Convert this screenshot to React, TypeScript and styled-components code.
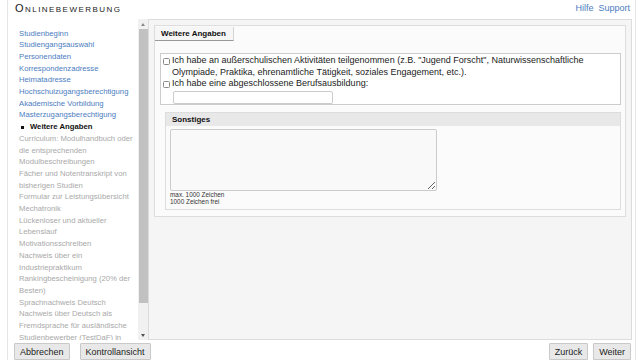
import styled, { createGlobalStyle } from "styled-components"

const GlobalStyle = createGlobalStyle`
  body {
    margin: 0;
    background: #fff;
    font-family: "Liberation Sans", Arial, sans-serif;
  }
`

type NavState = "done" | "active" | "open"

const steps: { label: string; state: NavState }[] = [
  { label: "Studienbeginn", state: "done" },
  { label: "Studiengangsauswahl", state: "done" },
  { label: "Personendaten", state: "done" },
  { label: "Korrespondenzadresse", state: "done" },
  { label: "Heimatadresse", state: "done" },
  { label: "Hochschulzugangsberechtigung", state: "done" },
  { label: "Akademische Vorbildung", state: "done" },
  { label: "Masterzugangsberechtigung", state: "done" },
  { label: "Weitere Angaben", state: "active" },
  { label: "Curriculum: Modulhandbuch oder die entsprechenden Modulbeschreibungen", state: "open" },
  { label: "Fächer und Notentranskript von bisherigen Studien", state: "open" },
  { label: "Formular zur Leistungsübersicht Mechatronik", state: "open" },
  { label: "Lückenloser und aktueller Lebenslauf", state: "open" },
  { label: "Motivationsschreiben", state: "open" },
  { label: "Nachweis über ein Industriepraktikum", state: "open" },
  { label: "Rankingbescheinigung (20% der Besten)", state: "open" },
  { label: "Sprachnachweis Deutsch", state: "open" },
  { label: "Nachweis über Deutsch als Fremdsprache für ausländische Studienbewerber (TestDaF) in", state: "open" },
]

export default function App() {
  return (
    <>
      <GlobalStyle />
      <Page>
        <Header>
          <Title>Onlinebewerbung</Title>
          <TopLinks>
            <TopLink href="#">Hilfe</TopLink>
            <TopLink href="#">Support</TopLink>
          </TopLinks>
        </Header>
        <Body>
          <Sidebar>
            <NavList>
              {steps.map((s) => (
                <NavItem key={s.label} $state={s.state}>
                  {s.state === "active" && <Bullet />}
                  {s.label}
                </NavItem>
              ))}
            </NavList>
            <ScrollTrack>
              <ScrollArrow>
                <ArrowUp />
              </ScrollArrow>
              <ScrollThumb />
              <ScrollArrow style={{ marginTop: "auto" }}>
                <ArrowDown />
              </ScrollArrow>
            </ScrollTrack>
          </Sidebar>
          <Main>
            <Panel>
              <Tab>Weitere Angaben</Tab>
              <CheckBox>
                <CheckRow>
                  <Check type="checkbox" />
                  <CheckLabel>
                    Ich habe an außerschulischen Aktivitäten teilgenommen (z.B. "Jugend Forscht",
                    Naturwissenschaftliche Olympiade, Praktika, ehrenamtliche Tätigkeit, soziales
                    Engagement, etc.).
                  </CheckLabel>
                </CheckRow>
                <CheckRow>
                  <Check type="checkbox" />
                  <CheckLabel>Ich habe eine abgeschlossene Berufsausbildung:</CheckLabel>
                </CheckRow>
                <TextInput type="text" />
              </CheckBox>
              <Fieldset>
                <Legend>Sonstiges</Legend>
                <FieldBody>
                  <TextArea />
                  <Note>max. 1000 Zeichen</Note>
                  <Note>1000 Zeichen frei</Note>
                </FieldBody>
              </Fieldset>
            </Panel>
          </Main>
        </Body>
        <Footer>
          <ButtonGroup $gap={10}>
            <Button>Abbrechen</Button>
            <Button>Kontrollansicht</Button>
          </ButtonGroup>
          <ButtonGroup $gap={5}>
            <Button>Zurück</Button>
            <Button>Weiter</Button>
          </ButtonGroup>
        </Footer>
      </Page>
    </>
  )
}

const Page = styled.div`
  margin-left: 7px;
  width: 629px;
  height: 360px;
  box-sizing: border-box;
  border-left: 1px solid #e6e6e6;
  border-right: 1px solid #e6e6e6;
  padding: 0 3px 0 7px;
  display: flex;
  flex-direction: column;
  overflow: hidden;
`

const Header = styled.div`
  height: 19px;
  flex-shrink: 0;
  box-sizing: border-box;
  padding: 2px 2px 0 0;
  display: flex;
  justify-content: space-between;
  align-items: flex-start;
`

const Title = styled.div`
  font-size: 11px;
  line-height: 12px;
  font-variant: small-caps;
  letter-spacing: 1.45px;
  color: #1a1a1a;
`

const TopLinks = styled.div`
  display: flex;
  gap: 5px;
`

const TopLink = styled.a`
  font-size: 9px;
  line-height: 12px;
  color: #4c7dc0;
  text-decoration: none;
`

const Body = styled.div`
  display: flex;
  height: 321px;
  flex-shrink: 0;
`

const Sidebar = styled.div`
  width: 133px;
  display: flex;
  flex-shrink: 0;
`

const NavList = styled.ul`
  list-style: none;
  margin: 0;
  width: 123px;
  height: 321px;
  box-sizing: border-box;
  padding: 8.5px 0 0 4px;
  overflow: hidden;
`

const NavItem = styled.li<{ $state: NavState }>`
  position: relative;
  font-size: 7.7px;
  line-height: 11.7px;
  color: ${(p) => (p.$state === "done" ? "#4c7dc0" : p.$state === "active" ? "#111" : "#a9a9a9")};
  font-weight: ${(p) => (p.$state === "active" ? "bold" : "normal")};
  padding-left: ${(p) => (p.$state === "active" ? "11px" : "0")};
`

const Bullet = styled.span`
  position: absolute;
  left: 2px;
  top: 5px;
  width: 2.5px;
  height: 2.5px;
  background: #111;
`

const ScrollTrack = styled.div`
  width: 10px;
  background: #f1f1f1;
  display: flex;
  flex-direction: column;
  align-items: center;
`

const ScrollArrow = styled.div`
  height: 10px;
  width: 10px;
  display: flex;
  align-items: center;
  justify-content: center;
`

const ArrowUp = styled.span`
  width: 0;
  height: 0;
  border-left: 2.5px solid transparent;
  border-right: 2.5px solid transparent;
  border-bottom: 3px solid #8a8a8a;
`

const ArrowDown = styled.span`
  width: 0;
  height: 0;
  border-left: 2.5px solid transparent;
  border-right: 2.5px solid transparent;
  border-top: 3px solid #505050;
`

const ScrollThumb = styled.div`
  width: 9px;
  height: 274px;
  background: #c1c1c1;
`

const Main = styled.div`
  flex: 1;
  box-sizing: border-box;
  border: 1px solid #dcdcdc;
  background: #f5f5f5;
  padding: 5px;
`

const Panel = styled.div`
  border: 1px solid #dddddd;
  background: #fbfbfb;
  padding: 1px 0 6px 0;
  display: flex;
  flex-direction: column;
`

const Tab = styled.div`
  align-self: flex-start;
  height: 13px;
  padding: 0 7px 0 6px;
  font-size: 8px;
  line-height: 13px;
  font-weight: bold;
  color: #111;
  background: #f6f6f6;
  border-right: 1px solid #d4d4d4;
  border-bottom: 1px solid #9a9a9a;
`

const CheckBox = styled.div`
  margin: 12px 4px 0 5px;
  border: 1px solid #cccccc;
  background: #fff;
  padding: 1px 2px 0 2px;
`

const CheckRow = styled.label`
  display: flex;
  align-items: flex-start;
`

const Check = styled.input`
  appearance: none;
  flex-shrink: 0;
  width: 7px;
  height: 7px;
  margin: 2.5px 2px 0 0;
  box-sizing: border-box;
  border: 1px solid #8a8a8a;
  border-radius: 1.5px;
  background: #fff;
`

const CheckLabel = styled.span`
  font-size: 9px;
  line-height: 11.5px;
  color: #222;
`

const TextInput = styled.input`
  display: block;
  margin: 1px 0 0 10px;
  width: 160px;
  height: 13px;
  box-sizing: border-box;
  border: 1px solid #cccccc;
  border-radius: 2px;
  background: #fff;
  padding: 0 3px;
  font: 9px "Liberation Sans", Arial, sans-serif;
`

const Fieldset = styled.div`
  margin: 7px 4px 0 10px;
  border: 1px solid #dddddd;
  background: #fbfbfb;
`

const Legend = styled.div`
  height: 13px;
  padding-left: 6px;
  background: #e8e8e8;
  font-size: 8px;
  line-height: 13px;
  font-weight: bold;
  color: #111;
`

const FieldBody = styled.div`
  padding: 3px 4px 4px 4px;
`

const TextArea = styled.textarea`
  display: block;
  margin: 0;
  width: 267px;
  height: 62px;
  box-sizing: border-box;
  border: 1px solid #cccccc;
  border-radius: 2px;
  background: #f9f9f9;
  font: 9px "Liberation Sans", Arial, sans-serif;
`

const Note = styled.div`
  font-size: 6.4px;
  line-height: 7.3px;
  color: #333;
`

const Footer = styled.div`
  margin-top: 3px;
  display: flex;
  justify-content: space-between;
  margin-left: -1px;
  margin-right: 1px;
`

const ButtonGroup = styled.div<{ $gap: number }>`
  display: flex;
  gap: ${(p) => p.$gap}px;
`

const Button = styled.button`
  height: 17px;
  padding: 0 5px;
  margin: 0;
  background: #e8e8e8;
  border: 1px solid #c9c9c9;
  border-radius: 1px;
  font: 9px "Liberation Sans", Arial, sans-serif;
  color: #222;
`
